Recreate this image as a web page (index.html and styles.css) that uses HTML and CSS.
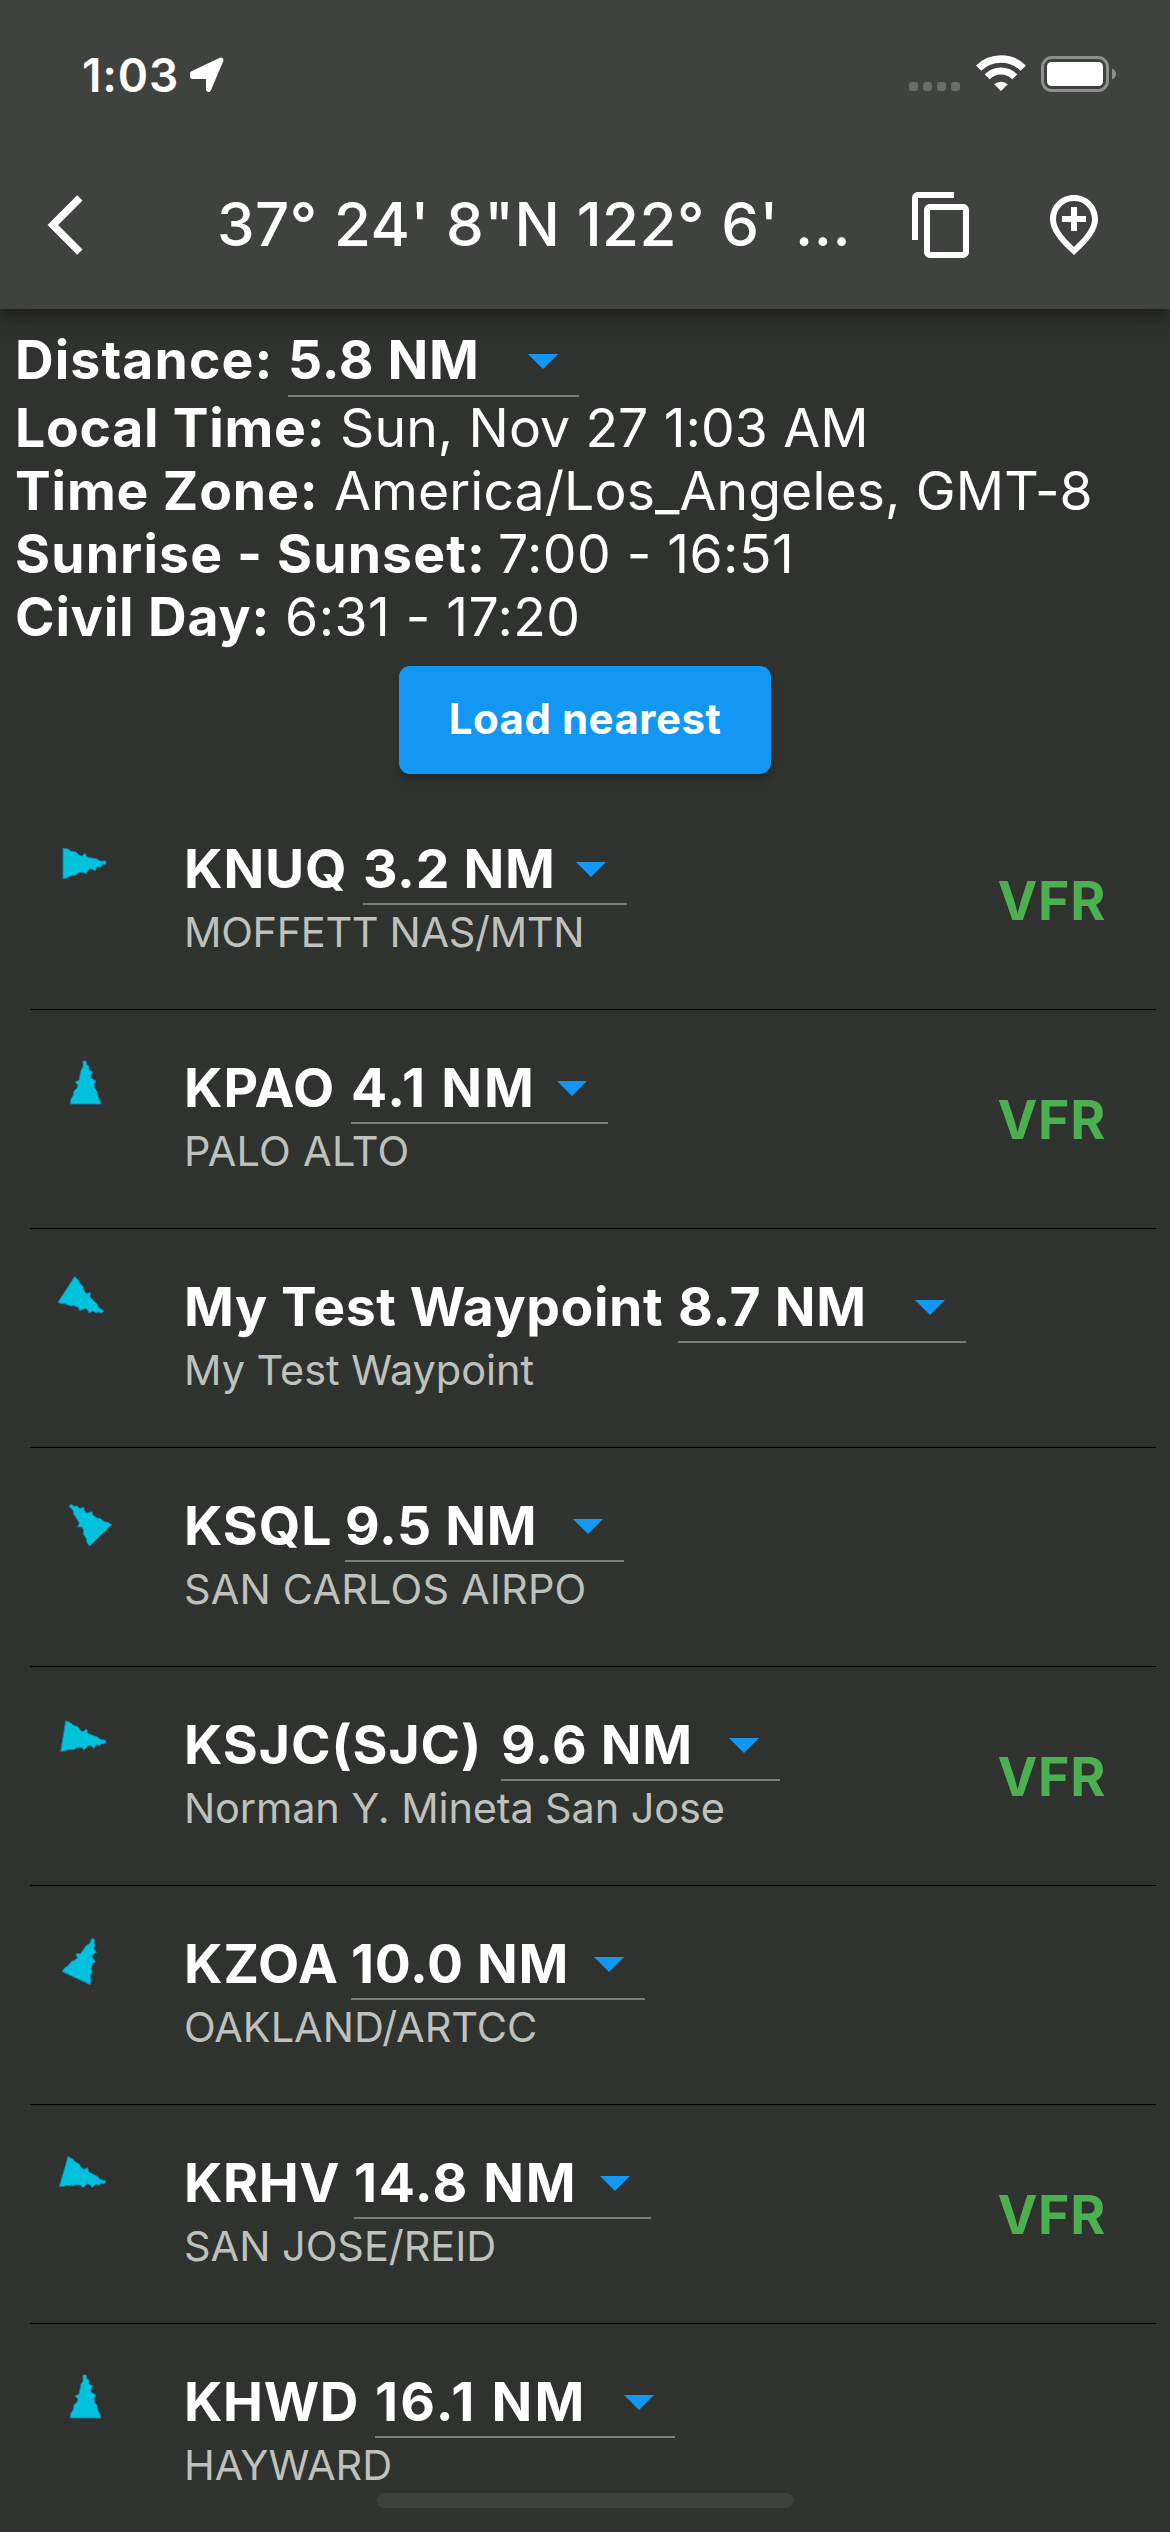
FILE: index.html
```html
<!DOCTYPE html>
<html lang="en">
<head>
<meta charset="utf-8">
<title>Nearest airports</title>
<link rel="stylesheet" href="styles.css">
</head>
<body>
<svg width="0" height="0" class="defs">
  <symbol id="pointer" viewBox="-24 -24 48 48">
    <path d="M-2-21 1-21 2-17 4-16 4-12 8-10 6-7 6-4 11-1 9 2 10 7 12 9 13 15 15 18 16 22-15 22-14 17-12 14-11 9-8 6-7 3-10 0-6-2-5-7-4-12-2-15Z"/>
  </symbol>
</svg>
<header class="header">
  <div class="status">
    <span class="clock">1:03</span>
    <svg class="loc" width="38" height="38" viewBox="0 0 38 38"><path d="M4.500 17.500 33 4 20.500 33.500V20.500H4.500Z"/></svg>
    <span class="cell"><i></i><i></i><i></i><i></i></span>
    <svg class="wifi" width="50" height="38" viewBox="-1 0 50 38">
      <path class="arc" stroke-width="7.500" d="M1.700 13.100A32 32 0 0 1 46.300 13.100"/>
      <path class="arc" stroke-width="7" d="M10.200 21.800A19.500 19.500 0 0 1 37.800 21.800"/>
      <path d="M24 36 17.200 29.200A10.500 10.500 0 0 1 30.800 29.200Z"/>
    </svg>
    <svg class="battery" width="76" height="38" viewBox="0 0 76 38">
      <rect class="shell" x="1.500" y="2.500" width="65" height="33" rx="9.500"/>
      <rect x="6" y="7" width="56" height="24" rx="4.500"/>
      <path class="nub" d="M71 13.500Q75 15.500 75 19T71 24.500Z"/>
    </svg>
  </div>
  <div class="toolbar">
    <svg class="icon back" viewBox="0 0 24 24"><path d="M17.510 3.870 15.730 2.100 5.840 12l9.900 9.900 1.770-1.770L9.380 12z"/></svg>
    <h1 class="title">37° 24' 8"N 122° 6' ...</h1>
    <svg class="icon copy" viewBox="0 0 24 24"><path d="M16 1H4c-1.100 0-2 .9-2 2v14h2V3h12V1zm3 4H8c-1.100 0-2 .9-2 2v14c0 1.100.9 2 2 2h11c1.100 0 2-.9 2-2V7c0-1.100-.9-2-2-2zm0 16H8V7h11v14z"/></svg>
    <svg class="icon" viewBox="0 0 24 24"><path d="M13 6v3h3v2h-3v3h-2v-3H8V9h3V6h2zm5 4.200C18 6.570 15.350 4 12 4s-6 2.570-6 6.200c0 2.340 1.950 5.440 6 9.140 4.050-3.700 6-6.800 6-9.140zM12 2c4.200 0 8 3.220 8 8.200 0 3.320-2.670 7.250-8 11.800-5.330-4.550-8-8.480-8-11.800C4 5.220 7.800 2 12 2z"/></svg>
  </div>
</header>
<main>
  <section class="info">
    <div class="line distance"><b>Distance:</b><span class="dist">5.8 NM</span></div>
    <div class="line local"><b>Local Time:</b><span>Sun, Nov 27 1:03 AM</span></div>
    <div class="line zone"><b>Time Zone:</b><span>America/Los_Angeles, GMT-8</span></div>
    <div class="line sun"><b>Sunrise - Sunset:</b><span>7:00 - 16:51</span></div>
    <div class="line civil"><b>Civil Day:</b><span>6:31 - 17:20</span></div>
  </section>
  <button class="load">Load nearest</button>
  <ul class="list">
    <li class="row knuq"><svg class="pointer"><use href="#pointer"/></svg><div class="text"><div class="head"><span class="name">KNUQ</span><span class="dist">3.2 NM</span></div><div class="sub">MOFFETT NAS/MTN</div></div><span class="rules">VFR</span></li>
    <li class="row kpao"><svg class="pointer"><use href="#pointer"/></svg><div class="text"><div class="head"><span class="name">KPAO</span><span class="dist">4.1 NM</span></div><div class="sub">PALO ALTO</div></div><span class="rules">VFR</span></li>
    <li class="row waypoint"><svg class="pointer"><use href="#pointer"/></svg><div class="text"><div class="head"><span class="name">My Test Waypoint</span><span class="dist">8.7 NM</span></div><div class="sub">My Test Waypoint</div></div></li>
    <li class="row ksql"><svg class="pointer"><use href="#pointer"/></svg><div class="text"><div class="head"><span class="name">KSQL</span><span class="dist">9.5 NM</span></div><div class="sub">SAN CARLOS AIRPO</div></div></li>
    <li class="row ksjc"><svg class="pointer"><use href="#pointer"/></svg><div class="text"><div class="head"><span class="name">KSJC(SJC)</span><span class="dist">9.6 NM</span></div><div class="sub">Norman Y. Mineta San Jose</div></div><span class="rules">VFR</span></li>
    <li class="row kzoa"><svg class="pointer"><use href="#pointer"/></svg><div class="text"><div class="head"><span class="name">KZOA</span><span class="dist">10.0 NM</span></div><div class="sub">OAKLAND/ARTCC</div></div></li>
    <li class="row krhv"><svg class="pointer"><use href="#pointer"/></svg><div class="text"><div class="head"><span class="name">KRHV</span><span class="dist">14.8 NM</span></div><div class="sub">SAN JOSE/REID</div></div><span class="rules">VFR</span></li>
    <li class="row khwd"><svg class="pointer"><use href="#pointer"/></svg><div class="text"><div class="head"><span class="name">KHWD</span><span class="dist">16.1 NM</span></div><div class="sub">HAYWARD</div></div></li>
  </ul>
</main>
<div class="home"></div>
</body>
</html>
```
FILE: styles.css
```css
* { box-sizing: border-box; }
body {
  margin: 0;
  width: 1170px;
  height: 2532px;
  overflow: hidden;
  position: relative;
  background: #30322f;
  color: #fff;
  font-family: Inter, "Liberation Sans", sans-serif;
  font-size: 53.5px;
  line-height: 61px;
  white-space: nowrap;
}
svg { display: block; flex: none; fill: #fff; }
.defs { position: absolute; }

.header {
  position: relative;
  height: 309px;
  background: #40423f;
  box-shadow: 0 6px 12px -3px rgba(0,0,0,.2), 0 12px 15px rgba(0,0,0,.14), 0 3px 30px rgba(0,0,0,.12);
}
.status { display: flex; align-items: flex-start; height: 141px; padding: 55px 54px 0 82px; }
.clock { width: 106px; font-size: 46px; font-weight: 600; line-height: 40px; letter-spacing: .85px; }
.loc { margin-top: 1px; stroke: #fff; stroke-width: 5; stroke-linejoin: round; }
.cell { display: flex; gap: 5px; margin: 27px 16px 0 auto; }
.cell i { width: 9px; height: 9px; border-radius: 3px; background: #6b6d6a; }
.wifi { margin-right: 15px; }
.arc { fill: none; stroke: #fff; }
.battery { margin-right: -1px; }
.shell { fill: none; stroke: #8e908d; stroke-width: 3; }
.nub { fill: #8e908d; }
.toolbar { display: flex; align-items: center; height: 168px; padding: 0 60px 0 30px; }
.icon { width: 72px; height: 72px; }
.title { margin: -2px 0 0 115px; font-size: 60px; line-height: 72px; font-weight: 500; letter-spacing: .45px; }
.copy { margin: 0 60px 0 auto; }

.info { padding: 20px 15px 0; height: 340px; }
.line { display: flex; height: 63px; letter-spacing: .1px; }
.line b { font-weight: 700; letter-spacing: .85px; flex: none; }
.distance { height: 68px; }
.distance b { width: 273px; letter-spacing: 1.1px; }
.distance .dist { width: 291px; }
.local b { width: 325px; letter-spacing: .75px; }
.zone b { width: 319px; }
.sun b { width: 483px; letter-spacing: 1.15px; }
.civil b { width: 270px; }
.sun, .civil { letter-spacing: .45px; }

.dist {
  display: flex;
  justify-content: space-between;
  border-bottom: 2px solid #7b7d7a;
  font-weight: 700;
  letter-spacing: .7px;
}
.dist::after {
  content: "";
  width: 30px;
  height: 15px;
  margin: 25px 21px 0 0;
  background: #1297f4;
  clip-path: polygon(0 0, 100% 0, 50% 100%);
}

.load {
  display: block;
  width: 372px;
  height: 108px;
  margin: 17px 0 17px 399px;
  padding: 0 0 2px;
  border: 0;
  border-radius: 11px;
  background: #1297f4;
  color: #fff;
  font: 700 42px/50px Inter, "Liberation Sans", sans-serif;
  letter-spacing: .5px;
  box-shadow: 0 6px 6px rgba(0,0,0,.2);
}

.list { margin: 0; padding: 0 14px 0 30px; list-style: none; }
.row { display: flex; height: 219px; padding-left: 31px; border-bottom: 1px solid #000; }
.pointer {
  width: 48px;
  height: 48px;
  margin: 48px 75px 0 0;
  fill: #00c2dc;
  stroke: #137fae;
  stroke-width: .8;
}
.text { padding-top: 47px; }
.head { display: flex; height: 67px; }
.head .dist::after { margin-top: 24px; }
.name { flex: none; font-weight: 700; letter-spacing: .9px; }
.sub { margin-top: 2px; font-size: 41.5px; line-height: 51px; color: #bfc1be; letter-spacing: -.05px; }
.rules { margin: 79px 50px 0 auto; color: #4caf50; font-weight: 700; letter-spacing: .7px; }

.knuq .pointer { transform: rotate(90deg); }
.knuq .name { width: 179px; }
.knuq .dist { width: 264px; }
.knuq .sub { letter-spacing: -.35px; }
.kpao .name { width: 167px; }
.kpao .dist { width: 257px; letter-spacing: 1.8px; }
.kpao .sub { letter-spacing: .25px; }
.waypoint .pointer { transform: rotate(123deg); }
.waypoint .name { width: 494px; letter-spacing: .6px; }
.waypoint .dist { width: 288px; }
.ksql .pointer { transform: rotate(-44deg); }
.ksql .name { width: 161px; }
.ksql .dist { width: 279px; }
.ksql .sub { letter-spacing: .15px; }
.ksjc .pointer { transform: rotate(99deg); }
.ksjc .name { width: 317px; }
.ksjc .dist { width: 279px; }
.ksjc .sub { letter-spacing: -.15px; }
.kzoa .pointer { transform: rotate(25deg); }
.kzoa .name { width: 167px; }
.kzoa .dist { width: 294px; }
.krhv .pointer { transform: rotate(106deg); }
.krhv .name { width: 170px; letter-spacing: .6px; }
.krhv .dist { width: 297px; letter-spacing: 1.6px; }
.khwd .name { width: 191px; letter-spacing: .6px; }
.khwd .dist { width: 300px; letter-spacing: 2.3px; }

.home {
  position: absolute;
  left: 377px;
  top: 2493px;
  width: 417px;
  height: 15px;
  border-radius: 8px;
  background: #3e403d;
}
```
